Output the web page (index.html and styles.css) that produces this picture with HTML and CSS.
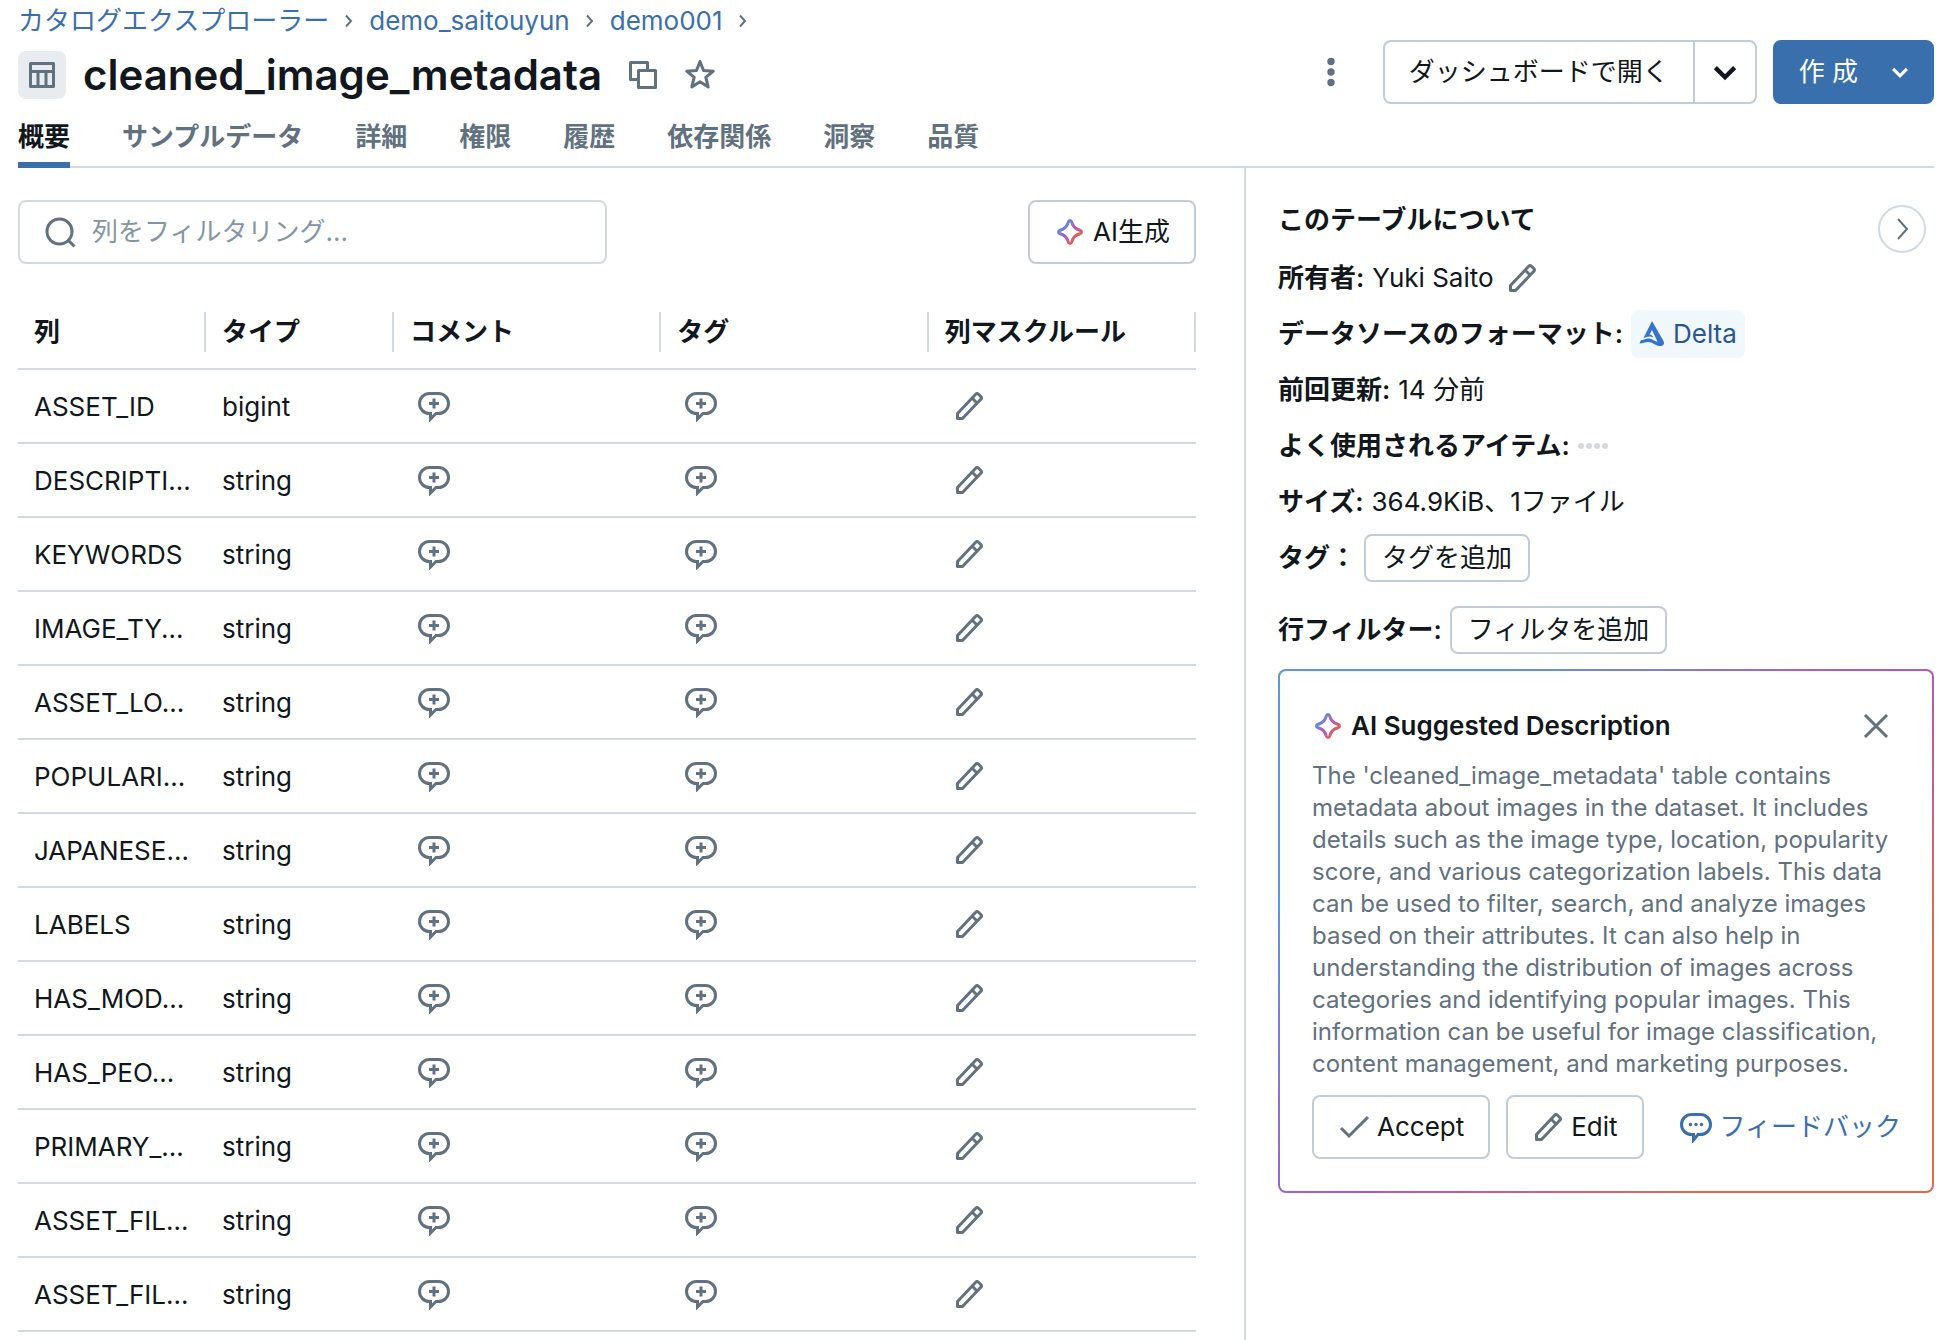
FILE: index.html
```html
<!DOCTYPE html>
<html lang="ja">
<head>
<meta charset="utf-8">
<meta name="viewport" content="width=device-width, initial-scale=1">
<title>cleaned_image_metadata</title>
<link rel="stylesheet" href="styles.css">
</head>
<body>
<svg class="sprite" aria-hidden="true">
  <defs>
    <linearGradient id="ai-gradient" x1="0" y1="0" x2="1" y2="1">
      <stop offset="0.2" stop-color="#5a8fe0"/>
      <stop offset="0.5" stop-color="#b557c8"/>
      <stop offset="0.8" stop-color="#e06248"/>
    </linearGradient>
    <symbol id="comment-plus" viewBox="0 0 32 32">
      <path d="M11.500 3.500h9a10 10 0 0 1 0 20h-2.500l-5.500 5.500v-5.500h-1a10 10 0 0 1 0-20z" fill="none" stroke="currentColor" stroke-width="3"/>
      <path d="M16 8.500v10M11 13.500h10" fill="none" stroke="currentColor" stroke-width="3"/>
    </symbol>
    <symbol id="comment-dots" viewBox="0 0 32 32">
      <path d="M11.500 3.500h9a10 10 0 0 1 0 20h-2.500l-4.500 5.500v-5.500h-2a10 10 0 0 1 0-20z" fill="none" stroke="currentColor" stroke-width="3"/>
      <circle cx="10.500" cy="13.500" r="1.700" fill="currentColor"/><circle cx="16" cy="13.500" r="1.700" fill="currentColor"/><circle cx="21.500" cy="13.500" r="1.700" fill="currentColor"/>
    </symbol>
    <symbol id="pencil" viewBox="0 0 32 32">
      <path d="M22.700 4.200a2 2 0 0 1 2.800 0l2.300 2.300a2 2 0 0 1 0 2.800L9.500 28.500h-5v-5zM19 8l5 5" fill="none" stroke="currentColor" stroke-width="3" stroke-linejoin="round"/>
    </symbol>
    <symbol id="sparkle" viewBox="0 0 32 32">
      <path d="M16 4.500c1 0 1.400.600 1.700 1.600 1.200 4.600 3.500 6.900 8.200 8.200 1 .300 1.600.700 1.600 1.700s-.600 1.400-1.600 1.700c-4.700 1.300-7 3.600-8.200 8.200-.300 1-.700 1.600-1.700 1.600s-1.400-.600-1.700-1.600c-1.200-4.600-3.500-6.900-8.200-8.200-1-.300-1.600-.700-1.600-1.700s.600-1.400 1.600-1.700c4.700-1.300 7-3.600 8.200-8.200.300-1 .700-1.600 1.700-1.600z" fill="none" stroke="url(#ai-gradient)" stroke-width="3"/>
    </symbol>
    <symbol id="chevron-down" viewBox="0 0 32 32">
      <path d="M5 11l11 11 11-11" fill="none" stroke="currentColor" stroke-width="5"/>
    </symbol>
    <symbol id="chevron-right" viewBox="0 0 16 16">
      <path d="M5 2.500l5 5.500-5 5.500" fill="none" stroke="currentColor" stroke-width="2"/>
    </symbol>
  </defs>
</svg>

<header class="page-header">
  <nav class="breadcrumb" aria-label="パンくずリスト">
    <a href="#">カタログエクスプローラー</a>
    <svg class="crumb-sep"><use href="#chevron-right"/></svg>
    <a href="#">demo_saitouyun</a>
    <svg class="crumb-sep"><use href="#chevron-right"/></svg>
    <a href="#">demo001</a>
    <svg class="crumb-sep"><use href="#chevron-right"/></svg>
  </nav>
  <div class="title-row">
    <div class="title">
      <span class="table-badge">
        <svg viewBox="0 0 32 32"><path d="M4.500 4.500h23v23h-23zM4.500 12.500h23M12 12.500v15M20 12.500v15" fill="none" stroke="currentColor" stroke-width="3" stroke-linejoin="round"/></svg>
      </span>
      <h1>cleaned_image_metadata</h1>
      <button class="icon-button" aria-label="コピー">
        <svg class="icon" viewBox="0 0 32 32"><path d="M11 20.500H3.500v-17h17V11M11.500 11.500h17v17h-17z" fill="none" stroke="currentColor" stroke-width="3" stroke-linejoin="round"/></svg>
      </button>
      <button class="icon-button" aria-label="お気に入り">
        <svg class="icon" viewBox="0 0 32 32"><path d="M16 2.500l3.500 9 9.800.700-7.500 6.200 2.400 9.600-8.200-5.300-8.200 5.300 2.400-9.600-7.500-6.200 9.800-.700z" fill="none" stroke="currentColor" stroke-width="3" stroke-linejoin="round"/></svg>
      </button>
    </div>
    <div class="actions">
      <button class="icon-button" aria-label="その他">
        <svg class="icon" viewBox="0 0 32 32" fill="currentColor"><circle cx="16" cy="5.500" r="3.700"/><circle cx="16" cy="16" r="3.700"/><circle cx="16" cy="26.500" r="3.700"/></svg>
      </button>
      <div class="split">
        <button class="button split-main">ダッシュボードで開く</button>
        <button class="button split-toggle" aria-label="開く方法"><svg class="icon"><use href="#chevron-down"/></svg></button>
      </div>
      <button class="button primary">作 成 <svg class="icon small"><use href="#chevron-down"/></svg></button>
    </div>
  </div>
  <nav class="tabs" aria-label="タブ">
    <a class="active" href="#">概要</a>
    <a href="#">サンプルデータ</a>
    <a href="#">詳細</a>
    <a href="#">権限</a>
    <a href="#">履歴</a>
    <a href="#">依存関係</a>
    <a href="#">洞察</a>
    <a href="#">品質</a>
  </nav>
</header>

<div class="content">
  <main class="columns">
    <div class="toolbar">
      <label class="search">
        <svg class="icon" viewBox="0 0 32 32"><circle cx="15.500" cy="15.500" r="12.500" fill="none" stroke="currentColor" stroke-width="3"/><path d="M24.500 24.500l6 6" stroke="currentColor" stroke-width="3"/></svg>
        <input type="text" aria-label="列をフィルタリング" placeholder="列をフィルタリング...">
      </label>
      <button class="button"><svg class="icon"><use href="#sparkle"/></svg>AI生成</button>
    </div>
    <table>
      <colgroup><col class="col-name"><col class="col-type"><col><col><col></colgroup>
      <thead>
        <tr><th><span>列</span></th><th><span>タイプ</span></th><th><span>コメント</span></th><th><span>タグ</span></th><th><span>列マスクルール</span></th></tr>
      </thead>
      <tbody id="column-rows"></tbody>
    </table>
  </main>

  <aside class="about">
    <button class="collapse" aria-label="パネルを閉じる"><svg viewBox="0 0 24 24"><path d="M8 2l9 10-9 10" fill="none" stroke="currentColor" stroke-width="2"/></svg></button>
    <h2>このテーブルについて</h2>
    <div class="fact"><b>所有者:</b><span>Yuki Saito</span><button class="icon-button owner-edit" aria-label="所有者を編集"><svg class="icon"><use href="#pencil"/></svg></button></div>
    <div class="fact"><b>データソースのフォーマット:</b><span class="tag"><svg viewBox="0 0 26 26"><path d="M13 0l11.500 20c1.500 3-.5 5.500-4 5-5-.7-7-4-11.500-4-3 0-5 1.500-8.500 1.500L2 19c4 0 4.500-2 8.500-1.500 3.500.5 5 3 8 3.300L13 9l-2.500 4.500c2 .3 3 1.300 4 3-3-1.500-6.500-1-10 .5z" fill="currentColor"/></svg>Delta</span></div>
    <div class="fact"><b>前回更新:</b><span>14 分前</span></div>
    <div class="fact"><b>よく使用されるアイテム:</b><span class="dots"><i></i><i></i><i></i><i></i></span></div>
    <div class="fact"><b>サイズ:</b><span>364.9KiB、1ファイル</span></div>
    <div class="fact"><b>タグ：</b><button class="button compact">タグを追加</button></div>
    <div class="fact row-filter"><b>行フィルター:</b><button class="button compact">フィルタを追加</button></div>

    <section class="suggestion">
      <div class="suggestion-head">
        <svg class="icon"><use href="#sparkle"/></svg>
        <h3>AI Suggested Description</h3>
        <button class="icon-button" aria-label="閉じる"><svg class="icon" viewBox="0 0 32 32"><path d="M5 5l22 22M27 5L5 27" stroke="currentColor" stroke-width="3"/></svg></button>
      </div>
      <p>The 'cleaned_image_metadata' table contains<br>metadata about images in the dataset. It includes<br>details such as the image type, location, popularity<br>score, and various categorization labels. This data<br>can be used to filter, search, and analyze images<br>based on their attributes. It can also help in<br>understanding the distribution of images across<br>categories and identifying popular images. This<br>information can be useful for image classification,<br>content management, and marketing purposes.</p>
      <div class="suggestion-actions">
        <button class="button"><svg class="icon" viewBox="0 0 32 32"><path d="M3 17l8 8L30 6" fill="none" stroke="currentColor" stroke-width="3"/></svg>Accept</button>
        <button class="button"><svg class="icon"><use href="#pencil"/></svg>Edit</button>
        <a class="feedback" href="#"><svg class="icon"><use href="#comment-dots"/></svg>フィードバック</a>
      </div>
    </section>
  </aside>
</div>
<script src="columns.js"></script>
</body>
</html>
```
FILE: styles.css
```css
* { box-sizing: border-box; }

:root {
  --text: #11171c;
  --muted: #61717f;
  --link: #3a6fae;
  --line: #d1d9e1;
  --control: #c0cdd8;
}

body {
  margin: 0;
  min-height: 100vh;
  display: flex;
  flex-direction: column;
  background: #fff;
  color: var(--text);
  font: 26px/40px Inter, "Noto Sans CJK JP", sans-serif;
}

a { color: var(--link); text-decoration: none; }
h1, h2, h3, p { margin: 0; }
svg { display: block; flex: none; }
.sprite { position: absolute; width: 0; height: 0; }
.icon { width: 32px; height: 32px; color: var(--muted); }
.icon.small { width: 20px; height: 20px; }

.icon-button {
  display: flex;
  padding: 0;
  border: 0;
  background: none;
}

.button {
  display: flex;
  align-items: center;
  justify-content: center;
  gap: 7px;
  height: 64px;
  padding: 0 24px;
  border: 2px solid var(--control);
  border-radius: 8px;
  background: #fff;
  color: var(--text);
  font: inherit;
  white-space: nowrap;
}

.page-header { padding: 0 16px 0 18px; }

.breadcrumb { display: flex; align-items: center; gap: 12px; height: 40px; padding-top: 2px; }
.crumb-sep { width: 16px; height: 16px; color: var(--muted); }

.title-row { display: flex; align-items: center; height: 64px; }
.title { display: flex; align-items: center; gap: 25px; padding-top: 6px; }
h1 { margin-left: -8px; font-size: 42px; font-weight: 600; line-height: 48px; }
.table-badge {
  display: flex;
  align-items: center;
  justify-content: center;
  width: 48px;
  height: 48px;
  border-radius: 8px;
  background: #e8ecf1;
  color: var(--muted);
}
.table-badge svg { width: 32px; height: 32px; }
.actions { display: flex; align-items: center; gap: 16px; margin-left: auto; }
.split { display: flex; margin-left: 20px; }
.split-main { border-right: 0; border-radius: 8px 0 0 8px; }
.split-toggle { width: 64px; padding: 0; border-radius: 0 8px 8px 0; }
.split-toggle .icon { width: 28px; height: 28px; color: var(--text); }
.primary { gap: 32px; padding: 0 22px 0 24px; border-color: var(--link); background: var(--link); color: #fff; }
.primary .icon { color: #fff; }

.tabs { display: flex; gap: 52px; height: 64px; border-bottom: 2px solid var(--line); font-weight: 600; }
.tabs a { height: 64px; padding-top: 13px; color: var(--muted); }
.tabs .active { border-bottom: 6px solid var(--link); color: var(--text); }

.content { display: flex; flex: 1; }
.columns { flex: 1; min-width: 0; padding: 32px 48px 0 18px; }
.toolbar { display: flex; justify-content: space-between; }
.search {
  display: flex;
  align-items: center;
  gap: 16px;
  width: 50%;
  height: 64px;
  padding: 0 24px;
  border: 2px solid var(--line);
  border-radius: 8px;
}
.search input { flex: 1; min-width: 0; padding: 0; border: 0; outline: 0; background: none; color: var(--text); font: inherit; }
.search input::placeholder { color: #8496a5; opacity: 1; }

table { width: 100%; margin-top: 32px; border-collapse: separate; border-spacing: 0; table-layout: fixed; }
.col-name, .col-type { width: 188px; }
th { height: 74px; padding: 0; border-bottom: 2px solid var(--line); font-weight: 600; text-align: left; }
th span { display: block; padding-left: 16px; border-right: 2px solid var(--line); }
td { height: 74px; padding: 2px 16px 0; border-bottom: 2px solid var(--line); white-space: nowrap; }
.icon-cell { padding: 0 24px; }

.about { position: relative; width: 706px; padding: 32px 16px 0 32px; border-left: 2px solid var(--line); }
.collapse {
  position: absolute;
  top: 37px;
  right: 24px;
  display: flex;
  align-items: center;
  justify-content: center;
  width: 48px;
  height: 48px;
  padding: 0;
  border: 2px solid var(--line);
  border-radius: 50%;
  background: #fff;
  color: var(--muted);
}
.collapse svg { width: 24px; height: 24px; }
h2 { margin-bottom: 10px; font-size: 26px; font-weight: 600; line-height: 40px; }
.fact { display: flex; align-items: center; gap: 8px; height: 56px; }
.fact b { font-weight: 600; }
.owner-edit { margin-left: 4px; }
.row-filter { margin: 16px 0 11px; }
.tag { display: flex; align-items: center; gap: 8px; height: 48px; padding: 0 8px; border-radius: 8px; background: #f0f7fd; color: #2a568f; }
.tag svg { width: 26px; height: 26px; color: #3674cc; }
.dots { display: flex; gap: 2px; }
.dots i { width: 6px; height: 6px; border-radius: 3px; background: #d6d9dc; }
.compact { height: 48px; padding: 0 16px; }

.suggestion {
  padding: 32px;
  border: 2px solid transparent;
  border-radius: 8px;
  background:
    linear-gradient(#fff, #fff) padding-box,
    linear-gradient(135deg, #5a9ad8 20%, #b255c8 50%, #e0684c 80%) border-box;
}
.suggestion-head { display: flex; align-items: center; gap: 7px; height: 46px; }
.suggestion h3 { flex: 1; font-size: 26px; font-weight: 600; }
.suggestion-head .icon-button { margin-right: 8px; }
.suggestion p { margin: 11px 0 15px; color: var(--muted); font-size: 24px; line-height: 32px; white-space: nowrap; }
.suggestion-actions { display: flex; gap: 16px; }
.feedback { display: flex; align-items: center; gap: 8px; margin-left: 20px; white-space: nowrap; }
.feedback .icon { color: var(--link); }
```
FILE: columns.js
```js
const columns = [
  ["ASSET_ID", "bigint"],
  ["DESCRIPTI...", "string"],
  ["KEYWORDS", "string"],
  ["IMAGE_TY...", "string"],
  ["ASSET_LO...", "string"],
  ["POPULARI...", "string"],
  ["JAPANESE...", "string"],
  ["LABELS", "string"],
  ["HAS_MOD...", "string"],
  ["HAS_PEO...", "string"],
  ["PRIMARY_...", "string"],
  ["ASSET_FIL...", "string"],
  ["ASSET_FIL...", "string"],
];

const iconCell = (icon, label) =>
  `<td class="icon-cell"><button class="icon-button" aria-label="${label}"><svg class="icon"><use href="#${icon}"/></svg></button></td>`;

document.getElementById("column-rows").innerHTML = columns
  .map(([name, type]) =>
    `<tr><td>${name}</td><td>${type}</td>` +
    iconCell("comment-plus", "コメントを追加") +
    iconCell("comment-plus", "タグを追加") +
    iconCell("pencil", "マスクルールを編集") +
    "</tr>")
  .join("");
```
